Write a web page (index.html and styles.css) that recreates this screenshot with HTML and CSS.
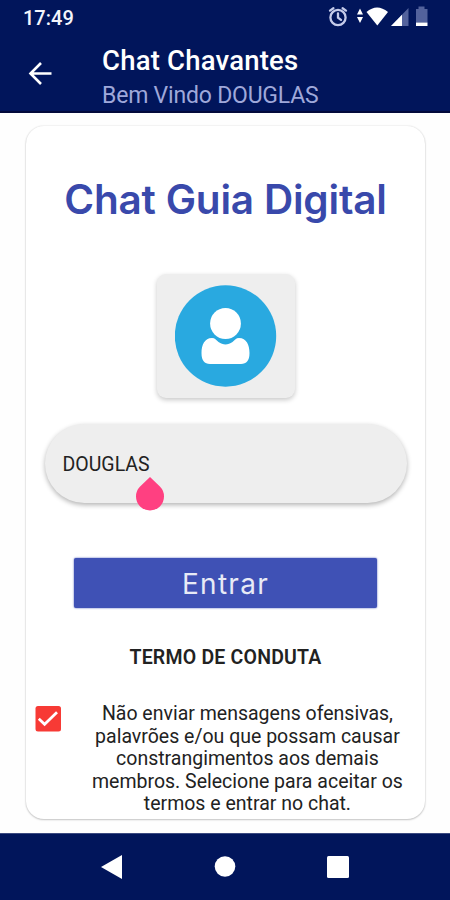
FILE: index.html
```
<!DOCTYPE html>
<html lang="pt-BR">
<head>
    <meta charset="UTF-8">
    <meta name="viewport" content="width=device-width, initial-scale=1.0">
    <title>Chat Chavantes</title>
    <link rel="stylesheet" href="styles.css">
</head>
<body>
    <header class="header">
        <div class="status-bar">
            <span class="time">17:49</span>
            <svg class="status-icons" width="104" height="24" viewBox="0 0 104 24">
                <g fill="none" stroke="#c5cbea" stroke-width="2.300" stroke-linecap="round">
                    <circle cx="12" cy="13.5" r="7.6"/>
                    <path d="M4 6.600l3.400-2.400M20 6.600l-3.400-2.400M12 9.300v4.400l3 2.200"/>
                </g>
                <path fill="#fff" d="M31 10.500l3-6 3 6zM31 13l3 6 3-6z"/>
                <path fill="#fff" d="M40.500 8Q51 -1 62 8L51.300 21.500z"/>
                <path fill="#53629c" d="M82.500 4v18H65z"/>
                <path fill="#fff" d="M76 10.800V22H65z"/>
                <path fill="#53629c" d="M90 5h2.500V2.500h6V5h3v13.500H90z"/>
                <path fill="#fff" d="M90 18.500h11.500V22H90z"/>
            </svg>
        </div>
        <div class="toolbar">
            <svg class="back" width="24" height="24" viewBox="0 0 24 24">
                <path d="M23.500 12.500H2M13 2L2.500 12.500 13 23" fill="none" stroke="#fff" stroke-width="2.600"/>
            </svg>
            <div class="toolbar-text">
                <h1>Chat Chavantes</h1>
                <p>Bem Vindo DOUGLAS</p>
            </div>
        </div>
    </header>

    <main class="content">
        <div class="card">
            <h2 class="title">Chat Guia Digital</h2>

            <div class="avatar">
                <svg width="102" height="102" viewBox="0 0 102 102">
                    <circle cx="50.500" cy="51" r="50.700" fill="#29a9e0"/>
                    <path fill="#fff" d="M37 53c3 0 4 2 6.500 4 4.500 3.200 9.500 3.200 14 0 2.500-2 3.500-4 6.500-4 7.500 0 10.500 7 10.500 15 0 7.500-3 11-8.500 11H35c-5.500 0-8.500-3.500-8.500-11 0-8 3-15 10.500-15z"/>
                    <circle cx="50.500" cy="38.500" r="15.400" fill="#fff"/>
                </svg>
            </div>

            <div class="name-field">
                <span class="name-value">DOUGLAS
                    <svg class="cursor-handle" width="28" height="34" viewBox="0 0 28 34">
                        <path fill="#ff4081" d="M14 0l9.900 9.600A14 14 0 1 1 4.100 9.600z"/>
                    </svg>
                </span>
            </div>

            <button class="enter">Entrar</button>

            <h3 class="terms-title">TERMO DE CONDUTA</h3>
            <div class="terms">
                <svg class="checkbox" width="26" height="26" viewBox="0 0 26 26">
                    <rect x="0.500" width="25.500" height="25.500" rx="2.500" fill="#f73a35"/>
                    <path d="M3.800 12.700l5.800 5.600L22 6.200" fill="none" stroke="#fff" stroke-width="2.700"/>
                </svg>
                <p>Não enviar mensagens ofensivas,<br>palavrões e/ou que possam causar<br>constrangimentos aos demais<br>membros. Selecione para aceitar os<br>termos e entrar no chat.</p>
            </div>
        </div>
    </main>

    <nav class="nav-bar">
        <svg width="24" height="26" viewBox="0 0 24 26"><path fill="#fff" d="M1 13L22 1v24z"/></svg>
        <svg width="24" height="26" viewBox="0 0 24 26"><circle cx="12" cy="12.500" r="10.300" fill="#fff"/></svg>
        <svg width="24" height="26" viewBox="0 0 24 26"><rect x="1" y="2" width="22" height="22" rx="1.500" fill="#fff"/></svg>
    </nav>
</body>
</html>
```
FILE: styles.css
```
* {
    box-sizing: border-box;
}
body {
    margin: 0;
    height: 900px;
    display: flex;
    flex-direction: column;
    overflow: hidden;
    font-family: Roboto, "Liberation Sans", sans-serif;
    background: #fefefe;
    color: #222;
}
h1, h2, h3, p {
    margin: 0;
    white-space: nowrap;
}
svg {
    display: block;
    flex: none;
}
.header {
    height: 113px;
    background: #01155b;
    border-bottom: 2px solid #020a3b;
}
.status-bar {
    height: 36px;
    padding: 4px 20px 0 23px;
    display: flex;
    justify-content: space-between;
}
.time {
    color: #f4f5fb;
    font-size: 20px;
    font-weight: 500;
    line-height: 28px;
}
.toolbar {
    display: flex;
    padding-left: 28px;
}
.back {
    margin-top: 25px;
}
.toolbar-text {
    margin-left: 50px;
    padding-top: 9px;
}
.toolbar h1 {
    color: #fff;
    font-size: 27.5px;
    font-weight: 550;
    line-height: 32px;
    letter-spacing: 0.2px;
}
.toolbar p {
    color: #9fa8da;
    font-size: 23px;
    line-height: 38px;
    letter-spacing: -0.2px;
}
.content {
    flex: 1;
    padding: 13px 25px 14px 26px;
}
.card {
    height: 693px;
    border-radius: 18px;
    background: #fff;
    box-shadow: 0 0 2px rgba(0,0,0,0.14), 0 1px 2px rgba(0,0,0,0.2);
    display: flex;
    flex-direction: column;
    align-items: center;
}
.title {
    margin-top: 49px;
    font-family: Inter, sans-serif;
    font-size: 40.5px;
    font-weight: 600;
    line-height: 50px;
    letter-spacing: -0.2px;
    color: #3949ab;
}
.avatar {
    width: 138px;
    height: 124px;
    margin-top: 49px;
    padding: 11px 18px;
    border-radius: 9px;
    background: #eee;
    box-shadow: 0 2px 5px rgba(0,0,0,0.22);
}
.name-field {
    width: 362px;
    height: 79px;
    margin-top: 26px;
    padding: 27px 18px;
    border-radius: 40px;
    background: #eee;
    box-shadow: 0 2px 5px rgba(0,0,0,0.3);
}
.name-value {
    position: relative;
    display: inline-block;
    font-size: 19.5px;
    line-height: 27px;
}
.cursor-handle {
    position: absolute;
    right: -14px;
    top: 26px;
}
.enter {
    width: 303px;
    height: 50px;
    margin-top: 55px;
    padding: 2px 0 0;
    border: 0;
    border-radius: 2px;
    background: #3f51b5;
    box-shadow: 0 0 2px #3f51b5;
    color: #e8eaf6;
    font-family: Inter, sans-serif;
    font-size: 28px;
    font-weight: 400;
    letter-spacing: 1.3px;
}
.terms-title {
    margin-top: 38px;
    font-size: 19.5px;
    font-weight: 600;
    line-height: 24px;
    letter-spacing: 0.2px;
}
.terms {
    width: 100%;
    margin-top: 33px;
    padding-left: 9px;
    display: flex;
}
.checkbox {
    margin-top: 3px;
}
.terms p {
    margin-left: 31px;
    text-align: center;
    font-size: 19.5px;
    line-height: 22.5px;
}
.nav-bar {
    height: 67px;
    padding: 0 100px;
    display: flex;
    justify-content: space-between;
    align-items: center;
    background: #01155b;
    border-top: 1px solid #3c4a80;
}
```
